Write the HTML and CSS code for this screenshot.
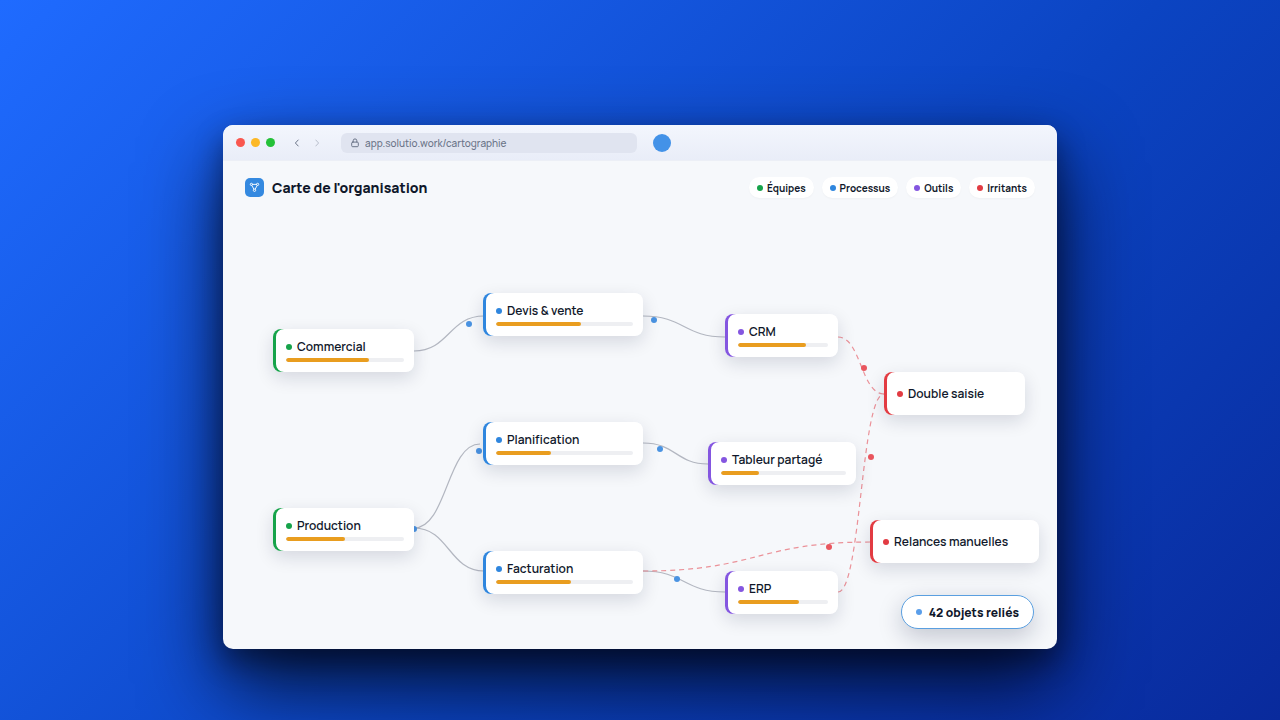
FILE: index.html
```html
<!DOCTYPE html>
<html lang="fr">
<head>
    <meta charset="UTF-8">
    <meta name="viewport" content="width=device-width, initial-scale=1.0">
    <title>Carte de l'organisation</title>
    <link rel="stylesheet" href="styles.css">
</head>
<body>
    <div class="window">
        <!-- Barre du navigateur -->
        <div class="toolbar">
            <div class="lights">
                <span class="light red"></span>
                <span class="light yellow"></span>
                <span class="light green"></span>
            </div>
            <div class="nav">
                <button type="button" class="nav-button" aria-label="Précédent">
                    <svg width="8" height="8" viewBox="0 0 8 8"><path d="M5.2 1 2.4 4l2.8 3"/></svg>
                </button>
                <button type="button" class="nav-button" aria-label="Suivant" disabled>
                    <svg width="8" height="8" viewBox="0 0 8 8"><path d="M2.8 1l2.8 3-2.8 3"/></svg>
                </button>
            </div>
            <label class="address">
                <svg width="8" height="10" viewBox="0 0 8 10"><rect x="0.7" y="4.1" width="6.6" height="4.6" rx="1"/><path d="M2.2 4V2.7a1.8 1.8 0 0 1 3.6 0V4"/></svg>
                <input type="text" value="app.solutio.work/cartographie" aria-label="Adresse">
            </label>
            <span class="avatar"></span>
        </div>

        <!-- En-tête -->
        <header class="header">
            <span class="logo">
                <svg width="11" height="11" viewBox="0 0 12 12"><path d="M3.2 2.6h5.6M3 3.6 5.4 8M9 3.6 6.6 8"/><circle cx="2.6" cy="2.6" r="1.2"/><circle cx="9.4" cy="2.6" r="1.2"/><circle cx="6" cy="9" r="1.3"/></svg>
            </span>
            <h1>Carte de l'organisation</h1>
            <ul class="legend">
                <li class="team"><span class="dot"></span>Équipes</li>
                <li class="process"><span class="dot"></span>Processus</li>
                <li class="tool"><span class="dot"></span>Outils</li>
                <li class="issue"><span class="dot"></span>Irritants</li>
            </ul>
        </header>

        <!-- Carte -->
        <main class="map">
            <svg class="links" width="834" height="451" viewBox="0 0 834 451">
                <path d="M191 153C226 153 226 118 261 118"/>
                <path d="M191 330C224 330 224 246 257 246"/>
                <path d="M191 330C226 330 226 373 261 373"/>
                <path d="M420 118C461 118 461 139 502 139"/>
                <path d="M420 245C453 245 453 266 485 266"/>
                <path d="M420 373C461 373 461 394 502 394"/>
                <g class="alert">
                    <path d="M420 373C534 373 534 344 648 344"/>
                    <path d="M615 139C638 139 638 196 661 196"/>
                    <path d="M615 394C638 394 638 196 661 196"/>
                </g>
                <circle cx="246" cy="126" r="3"/>
                <circle cx="256" cy="253" r="3"/>
                <circle cx="191" cy="331" r="3"/>
                <circle cx="431" cy="122" r="3"/>
                <circle cx="437" cy="251" r="3"/>
                <circle cx="454" cy="381" r="3"/>
                <circle class="alert-dot" cx="641" cy="170" r="3"/>
                <circle class="alert-dot" cx="648" cy="259" r="3"/>
                <circle class="alert-dot" cx="606" cy="349" r="3"/>
            </svg>

            <div class="node team commercial">
                <p><span class="dot"></span>Commercial</p>
                <div class="bar"><div class="fill" style="width: 70%"></div></div>
            </div>
            <div class="node team production">
                <p><span class="dot"></span>Production</p>
                <div class="bar"><div class="fill" style="width: 50%"></div></div>
            </div>
            <div class="node process devis">
                <p><span class="dot"></span>Devis &amp; vente</p>
                <div class="bar"><div class="fill" style="width: 62%"></div></div>
            </div>
            <div class="node process planification">
                <p><span class="dot"></span>Planification</p>
                <div class="bar"><div class="fill" style="width: 40%"></div></div>
            </div>
            <div class="node process facturation">
                <p><span class="dot"></span>Facturation</p>
                <div class="bar"><div class="fill" style="width: 55%"></div></div>
            </div>
            <div class="node tool crm">
                <p><span class="dot"></span>CRM</p>
                <div class="bar"><div class="fill" style="width: 75%"></div></div>
            </div>
            <div class="node tool tableur">
                <p><span class="dot"></span>Tableur partagé</p>
                <div class="bar"><div class="fill" style="width: 30%"></div></div>
            </div>
            <div class="node tool erp">
                <p><span class="dot"></span>ERP</p>
                <div class="bar"><div class="fill" style="width: 68%"></div></div>
            </div>
            <div class="node issue double">
                <p><span class="dot"></span>Double saisie</p>
            </div>
            <div class="node issue relances">
                <p><span class="dot"></span>Relances manuelles</p>
            </div>

            <div class="counter"><span class="dot"></span>42 objets reliés</div>
        </main>
    </div>
</body>
</html>
```
FILE: styles.css
```css
* {
    margin: 0;
    padding: 0;
    box-sizing: border-box;
}

body {
    font-family: Manrope, Inter, sans-serif;
    background: linear-gradient(135deg, #1f6bff 0%, #0b44c2 58%, #092a9c 100%);
    min-height: 100vh;
    padding: 125px 223px 71px;
    display: flex;
    color: #0f172a;
}

.window {
    flex: 1;
    display: flex;
    flex-direction: column;
    background-color: #f6f8fb;
    border-radius: 10px;
    overflow: hidden;
    box-shadow: 0 36px 80px rgba(0, 2, 14, 0.8), 0 12px 28px rgba(0, 2, 14, 0.4);
}

.toolbar {
    display: flex;
    align-items: center;
    height: 36px;
    padding: 0 13px;
    background: linear-gradient(#f3f6fd, #e9edf8);
    border-bottom: 1px solid #eceff6;
}

.lights {
    display: flex;
    gap: 6px;
}

.light {
    width: 9px;
    height: 9px;
    border-radius: 50%;
}

.red {
    background-color: #f9574f;
}

.yellow {
    background-color: #fcb827;
}

.green {
    background-color: #24c138;
}

.nav {
    display: flex;
    gap: 12px;
    margin: 0 20px 0 18px;
}

.nav-button {
    display: flex;
    border: none;
    background: none;
}

.nav-button:disabled {
    opacity: 0.4;
}

.toolbar svg {
    fill: none;
    stroke: #6b7488;
    stroke-width: 1;
    stroke-linecap: round;
    stroke-linejoin: round;
}

.address {
    flex: 0 1 296px;
    display: flex;
    align-items: center;
    gap: 6px;
    height: 20px;
    padding: 0 10px;
    border-radius: 6px;
    background-color: #e0e4f0;
}

.address input {
    flex: 1;
    min-width: 0;
    border: none;
    outline: none;
    background: none;
    font-family: Manrope, Inter, sans-serif;
    font-size: 10px;
    font-weight: 500;
    color: #6b7488;
}

.avatar {
    width: 18px;
    height: 18px;
    margin-left: 16px;
    border-radius: 50%;
    background-color: #4392e8;
}

.header {
    display: flex;
    align-items: center;
    gap: 8px;
    padding: 16px 22px 0;
}

.logo {
    display: flex;
    align-items: center;
    justify-content: center;
    width: 19px;
    height: 19px;
    border-radius: 5px;
    background-color: #3489e0;
}

.logo svg {
    fill: none;
    stroke: #fff;
    stroke-width: 1;
}

h1 {
    font-size: 14px;
    font-weight: 800;
    line-height: 20px;
}

.legend {
    display: flex;
    gap: 8px;
    margin-left: auto;
    list-style: none;
}

.legend li {
    display: flex;
    align-items: center;
    gap: 4px;
    height: 21px;
    padding: 0 8px;
    border-radius: 11px;
    background-color: #fff;
    box-shadow: 0 1px 2px rgba(15, 23, 42, 0.03);
    font-size: 10px;
    font-weight: 700;
}

.dot {
    flex: none;
    width: 6px;
    height: 6px;
    border-radius: 50%;
    background-color: var(--color);
}

.team {
    --color: #16a34a;
}

.process {
    --color: #2f86de;
}

.tool {
    --color: #8456e0;
}

.issue {
    --color: #e23b42;
}

.map {
    position: relative;
    flex: 1;
    min-height: 451px;
}

.links {
    position: absolute;
    top: 0;
    left: 0;
}

.links path {
    fill: none;
    stroke: #b3b7c1;
    stroke-width: 1.2;
}

.links .alert path {
    stroke: #eb9299;
    stroke-dasharray: 5 4;
}

.links circle {
    fill: #4a93e2;
}

.links .alert-dot {
    fill: #e9565e;
}

.node {
    position: absolute;
    display: flex;
    flex-direction: column;
    justify-content: center;
    gap: 3px;
    height: 43px;
    padding: 0 10px 0 13px;
    border-radius: 8px;
    background-color: #fff;
    box-shadow: inset 3px 0 0 var(--color), 0 6px 18px rgba(15, 23, 60, 0.14);
}

.node p {
    display: flex;
    align-items: center;
    gap: 5px;
    font-size: 12px;
    font-weight: 600;
    line-height: 16px;
}

.bar {
    height: 4px;
    border-radius: 2px;
    background-color: #eeeff2;
    overflow: hidden;
}

.fill {
    height: 100%;
    border-radius: 2px;
    background-color: #e99d1f;
}

/* Position des noeuds sur la carte */
.commercial {
    left: 50px;
    top: 131px;
    width: 141px;
}

.production {
    left: 50px;
    top: 310px;
    width: 141px;
}

.devis {
    left: 260px;
    top: 95px;
    width: 160px;
}

.planification {
    left: 260px;
    top: 224px;
    width: 160px;
}

.facturation {
    left: 260px;
    top: 353px;
    width: 160px;
}

.crm {
    left: 502px;
    top: 116px;
    width: 113px;
}

.tableur {
    left: 485px;
    top: 244px;
    width: 148px;
}

.erp {
    left: 502px;
    top: 373px;
    width: 113px;
}

.double {
    left: 661px;
    top: 174px;
    width: 141px;
}

.relances {
    left: 647px;
    top: 322px;
    width: 169px;
}

.counter {
    position: absolute;
    right: 23px;
    bottom: 20px;
    display: flex;
    align-items: center;
    gap: 7px;
    height: 34px;
    padding: 0 14px;
    border: 1px solid #5a9fe0;
    border-radius: 17px;
    background-color: #fff;
    box-shadow: 0 8px 24px rgba(15, 23, 60, 0.22);
    font-size: 12px;
    font-weight: 800;
    --color: #5a9eea;
}
```
